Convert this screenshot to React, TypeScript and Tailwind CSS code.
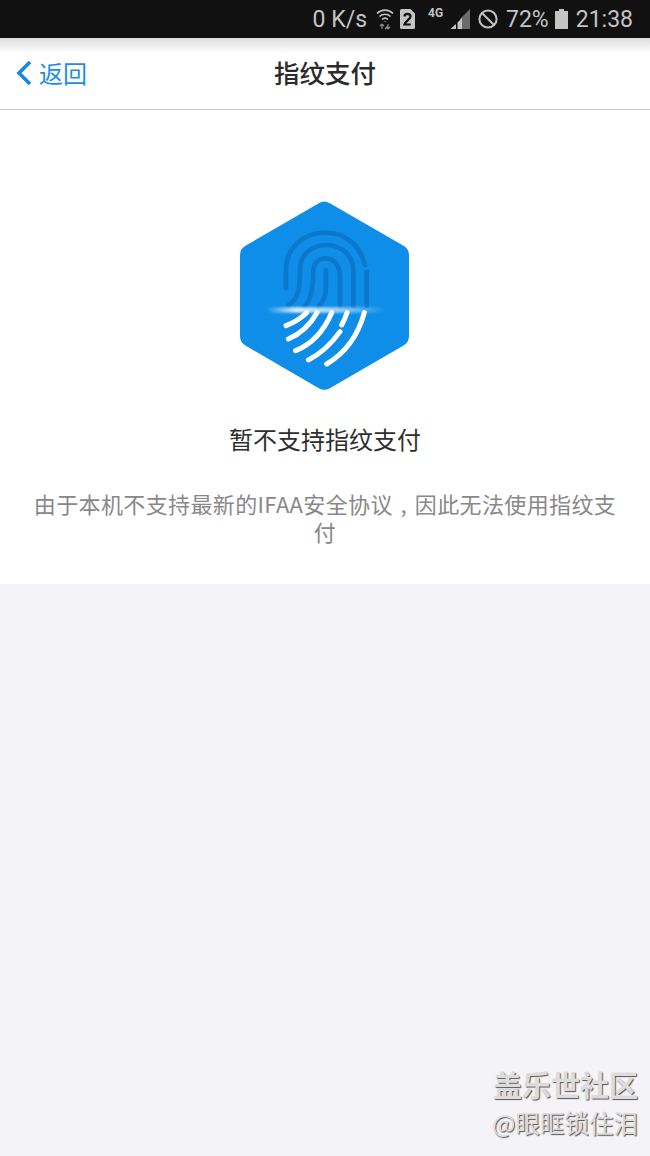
import React from "react";

const cjk = "font-['Noto_Sans_CJK_SC','Noto_Sans',sans-serif]";

function StatusBar() {
  return (
    <div className="flex h-[38px] items-center justify-end bg-[#111111] pr-[17px] font-['Roboto',sans-serif] text-[23px] leading-none text-[#c4c4c4]">
      <span className="mr-[9px]">0 K/s</span>
      {/* wifi with up/down arrows */}
      <svg width="18" height="24" viewBox="0 0 18 24" className="mr-[6px]" fill="none" stroke="#c4c4c4" strokeWidth="1.6">
        <path d="M1 6.5C5.5 2 12.5 2 17 6.5" />
        <path d="M3.5 9.5C6.5 6.5 11.5 6.5 14.5 9.5" />
        <path d="M6 12.5C7.8 10.8 10.2 10.8 12 12.5" />
        <path d="M9 14.5v.5" strokeWidth="2.4" />
        <path d="M6 17v5M9 22l3-3M12 22v-5M6 17l-2 2M6 17l2 2M12 22l-2-2M12 22l2-2" stroke="#8a8a8a" strokeWidth="1.2" />
      </svg>
      {/* sim 2 */}
      <svg width="15" height="20" viewBox="0 0 15 20" className="mr-[13px]">
        <path d="M1.5 0H10.5L15 4.5V18.5A1.5 1.5 0 0 1 13.5 20H1.5A1.5 1.5 0 0 1 0 18.5V1.5A1.5 1.5 0 0 1 1.5 0Z" fill="#c4c4c4" />
        <path d="M4.5 7.5C4.5 4 10.5 4 10.5 7.5C10.5 10 6 11.5 4.5 15.5H10.8" fill="none" stroke="#111111" strokeWidth="2.2" />
      </svg>
      <span className="mb-[12px] mr-[6px] w-[16px] text-[12px] font-bold">4G</span>
      {/* signal */}
      <svg width="20" height="20" viewBox="0 0 20 20" className="mr-[8px]">
        <path d="M20 0V20H10V10Z" fill="#6b6b6b" />
        <path d="M6 15V20H1V19.5Z M7.5 13.5L12 9V20H7.5Z" fill="#c4c4c4" />
      </svg>
      {/* do not disturb */}
      <svg width="20" height="20" viewBox="0 0 20 20" className="mr-[8px]" fill="none" stroke="#c4c4c4" strokeWidth="2">
        <circle cx="10" cy="10" r="8.6" />
        <path d="M4 4L16 16" />
      </svg>
      <span className="mr-[6px]">72%</span>
      {/* battery */}
      <svg width="13" height="20" viewBox="0 0 13 20" className="mr-[8px]">
        <path d="M4 0H9V2H13V20H0V2H4Z" fill="#c4c4c4" />
      </svg>
      <span>21:38</span>
    </div>
  );
}

function NavBar() {
  return (
    <div className="relative flex h-[72px] items-center justify-center border-b border-[#c6c6c6] bg-gradient-to-b from-[#dedede] via-white via-[22%] to-white">
      <div className="absolute left-[16px] top-[20px] flex items-center">
        <svg width="16" height="26" viewBox="0 0 16 26" fill="none" stroke="#1587ea" strokeWidth="3.6">
          <path d="M14 2L3 13L14 24" />
        </svg>
        <span className={`${cjk} ml-[7px] text-[24px] leading-[30px] text-[#1c8ce8]`}>返回</span>
      </div>
      <span className={`${cjk} mb-[3px] text-[25.5px] font-medium leading-[30px] text-[#2b2b2b]`}>指纹支付</span>
    </div>
  );
}

function FingerprintBadge() {
  return (
    <svg width="200" height="210" viewBox="0 0 600 630" className="mb-[24px] mt-[80px]">
      <defs>
        <linearGradient id="scan" x1="0" x2="1" y1="0" y2="0">
          <stop offset="0" stopColor="#ffffff" stopOpacity="0" />
          <stop offset="0.25" stopColor="#ffffff" stopOpacity="0.85" />
          <stop offset="0.6" stopColor="#ffffff" stopOpacity="0.6" />
          <stop offset="1" stopColor="#ffffff" stopOpacity="0" />
        </linearGradient>
        <filter id="blur" x="-10%" y="-200%" width="120%" height="500%">
          <feGaussianBlur stdDeviation="2.5" />
        </filter>
      </defs>
      <polygon
        points="298,68 519,196 519,438 298,566 78,438 78,196"
        fill="#0f8ee9"
        stroke="#0f8ee9"
        strokeWidth="66"
        strokeLinejoin="round"
      />
      <g fill="none" stroke="#0b78cb" strokeWidth="14" strokeLinecap="round">
        <path d="M183 295V240C183 170 240 128 300 128C360 128 405 165 420 225" />
        <path d="M425 245V348" />
        <path d="M190 346C222 325 225 290 225 240C225 195 260 165 303 165C350 165 385 195 385 245V350" />
        <path d="M238 350C262 325 265 280 265 245C265 220 280 205 303 205C330 205 345 230 345 262V350" />
        <path d="M303 240V290C303 315 295 335 280 350" />
      </g>
      <g fill="none" stroke="#ffffff" strokeWidth="15" strokeLinecap="round">
        <path d="M183 407C205 398 228 385 245 368" />
        <path d="M190 447C225 432 255 405 276 368" />
        <path d="M212 482C260 462 298 420 320 368" />
        <path d="M250 510C290 490 320 460 345 425" />
        <path d="M305 522C360 490 398 440 418 368" />
        <path d="M350 405C357 392 362 380 366 368" />
      </g>
      <rect x="125" y="352" width="355" height="16" fill="url(#scan)" filter="url(#blur)" />
    </svg>
  );
}

export default function App() {
  return (
    <div className="relative flex min-h-[1156px] flex-col bg-[#f3f3f8]">
      <StatusBar />
      <NavBar />
      <div className="flex h-[474px] flex-col items-center bg-white">
        <FingerprintBadge />
        <h1 className={`${cjk} text-[24px] font-normal leading-[30px] text-[#2e2e2e]`}>暂不支持指纹支付</h1>
        <p className={`${cjk} mt-[35px] w-[590px] text-center text-[22px] leading-[28px] tracking-[0.37px] text-[#888888] [word-spacing:2.5px]`}>
          由于本机不支持最新的IFAA安全协议 , 因此无法使用指纹支付
        </p>
      </div>
      {/* community watermark */}
      <div className={`${cjk} absolute bottom-[15px] right-[12px] flex flex-col items-end text-[#dcdcdc]`}>
        <span className="mb-[2px] text-[29px] font-bold leading-[38px] [text-shadow:1px_1px_1px_#555555]">盖乐世社区</span>
        <span className="text-[24.5px] leading-[36px] [text-shadow:1px_1px_1px_#555555]">@眼眶锁住泪</span>
      </div>
    </div>
  );
}
